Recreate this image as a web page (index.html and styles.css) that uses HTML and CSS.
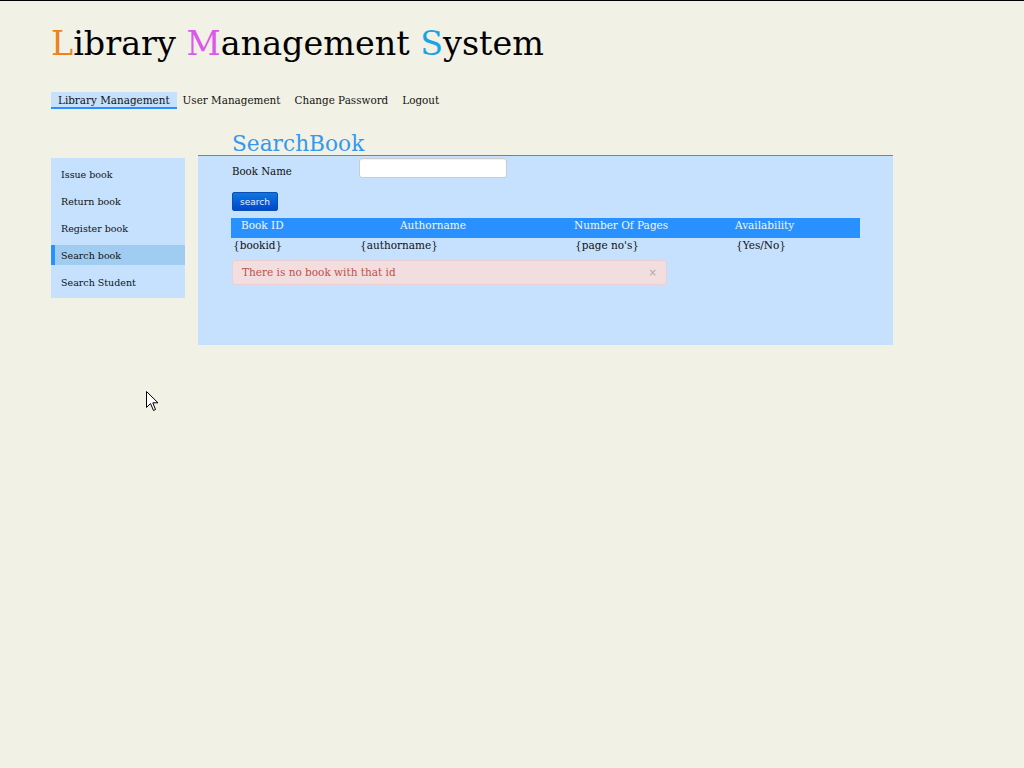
FILE: index.html
```html
<!DOCTYPE html>
<html>
<head>
<meta charset="utf-8">
<title>Library Management System</title>
<link rel="stylesheet" href="styles.css">
</head>
<body>
<div class="page">
  <h1 class="site-title"><span class="c-l">L</span>ibrary <span class="c-m">M</span>anagement <span class="c-s">S</span>ystem</h1>
  <nav class="topnav">
    <a class="topnav-item active">Library Management</a>
    <a class="topnav-item">User Management</a>
    <a class="topnav-item">Change Password</a>
    <a class="topnav-item">Logout</a>
  </nav>
  <div class="main">
    <ul class="sidebar">
      <li class="side-item">Issue book</li>
      <li class="side-item">Return book</li>
      <li class="side-item">Register book</li>
      <li class="side-item active">Search book</li>
      <li class="side-item">Search Student</li>
    </ul>
    <div class="content">
      <h2 class="content-title">SearchBook</h2>
      <div class="panel">
        <div class="form-row">
          <label class="form-label">Book Name</label>
          <input class="form-input" type="text">
        </div>
        <button class="btn-search">search</button>
        <div class="results">
          <div class="row head">
            <div class="cell h1">Book ID</div>
            <div class="cell h2">Authorname</div>
            <div class="cell h3">Number Of Pages</div>
            <div class="cell h4">Availability</div>
          </div>
          <div class="row data">
            <div class="cell">{bookid}</div>
            <div class="cell">{authorname}</div>
            <div class="cell">{page no's}</div>
            <div class="cell">{Yes/No}</div>
          </div>
        </div>
        <div class="alert">
          <span>There is no book with that id</span>
          <span class="alert-close">×</span>
        </div>
      </div>
    </div>
  </div>
</div>
<svg class="cursor" width="13" height="21" viewBox="0 0 13 21"><path d="M0.5 0.5 L0.5 16.5 L4.5 12.5 L7.5 19.5 L9.5 18.5 L6.8 11.8 L12 11.8 Z" fill="#fff" stroke="#000" stroke-width="1" stroke-linejoin="miter"/></svg>
</body>
</html>
```
FILE: styles.css
```css
html, body {
  margin: 0;
  padding: 0;
}
body {
  background: #f2f1e6;
  border-top: 1px solid #000;
  font-family: "DejaVu Serif", serif;
  color: #111;
  min-height: 767px;
}
.page {
  padding-left: 51px;
}
.site-title {
  margin: 0;
  padding-top: 22px;
  font-weight: normal;
  font-size: 33.4px;
  line-height: 42px;
  color: #000;
}
.c-l { color: #f0821e; }
.c-m { color: #db58ea; }
.c-s { color: #1aa5e2; }
.topnav {
  display: flex;
  margin-top: 27px;
  height: 17px;
}
.topnav-item {
  font-size: 10.4px;
  line-height: 16px;
  height: 15px;
  padding: 0 7px;
  border-bottom: 2px solid transparent;
  color: #111;
}
.topnav-item.active {
  background: #c5e1fd;
  border-bottom-color: #2891ff;
  margin-right: -1px;
}
.main {
  display: flex;
  margin-top: 22px;
  align-items: flex-start;
}
.sidebar {
  list-style: none;
  margin: 27px 13px 0 0;
  padding: 6px 0;
  width: 134px;
  background: #c5e1fd;
  display: flex;
  flex-direction: column;
  gap: 7px;
}
.side-item {
  height: 20px;
  line-height: 21px;
  font-size: 9.5px;
  border-left: 4px solid transparent;
  padding-left: 6px;
  color: #111;
}
.side-item.active {
  background: #a0ccf2;
  border-left-color: #2891ff;
}
.content {
  width: 695px;
}
.content-title {
  margin: 0;
  padding: 2px 0 0 34px;
  font-weight: normal;
  font-size: 21.7px;
  line-height: 22px;
  color: #3399ee;
}
.panel {
  background: #c5e1fd;
  border-top: 1px solid #3d8fe0;
  padding: 2px 0 60px 34px;
}
.form-row {
  display: flex;
  align-items: center;
  height: 20px;
}
.form-label {
  font-size: 10.2px;
  width: 127px;
  padding-top: 6px;
}
.form-input {
  box-sizing: border-box;
  width: 148px;
  height: 20px;
  margin: 0;
  border: 1px solid #ccc;
  border-radius: 3px;
  background: #fff;
  box-shadow: inset 0 1px 1px rgba(0,0,0,0.06);
}
.btn-search {
  display: block;
  margin: 14px 0 0 0;
  width: 46px;
  height: 19px;
  padding: 0;
  border: 1px solid #0a4fb3;
  border-radius: 2px;
  background: linear-gradient(#0f77e0, #0047cc);
  color: #e8f0ff;
  font-family: "DejaVu Sans", sans-serif;
  font-size: 9px;
  line-height: 16px;
}
.results {
  margin-top: 7px;
  margin-left: -1px;
  width: 629px;
}
.row {
  display: grid;
  grid-template-columns: 127px 215px 161px 126px;
}
.row.head {
  background: #2891ff;
  height: 20px;
  color: #f0f6ff;
}
.row.head .cell {
  line-height: 15px;
}
.row.data {
  height: 15px;
  color: #111;
}
.cell {
  font-size: 10.5px;
  line-height: 15px;
  padding-left: 2px;
  white-space: nowrap;
}
.cell.h1 { padding-left: 10px; }
.cell.h2 { padding-left: 42px; }
.cell.h3 { padding-left: 1px; }
.cell.h4 { padding-left: 1px; }
.alert {
  box-sizing: border-box;
  margin: 7px 0 0 0;
  width: 435px;
  height: 25px;
  background: #f2dede;
  border: 1px solid #ebd0d3;
  border-radius: 3px;
  color: #c0504d;
  font-size: 10.5px;
  line-height: 23px;
  padding: 0 9px 0 9px;
  display: flex;
  justify-content: space-between;
}
.alert-close {
  color: #aaa;
  font-family: "DejaVu Sans", sans-serif;
  font-size: 10px;
}
.cursor {
  position: absolute;
  left: 146px;
  top: 391px;
}
```
